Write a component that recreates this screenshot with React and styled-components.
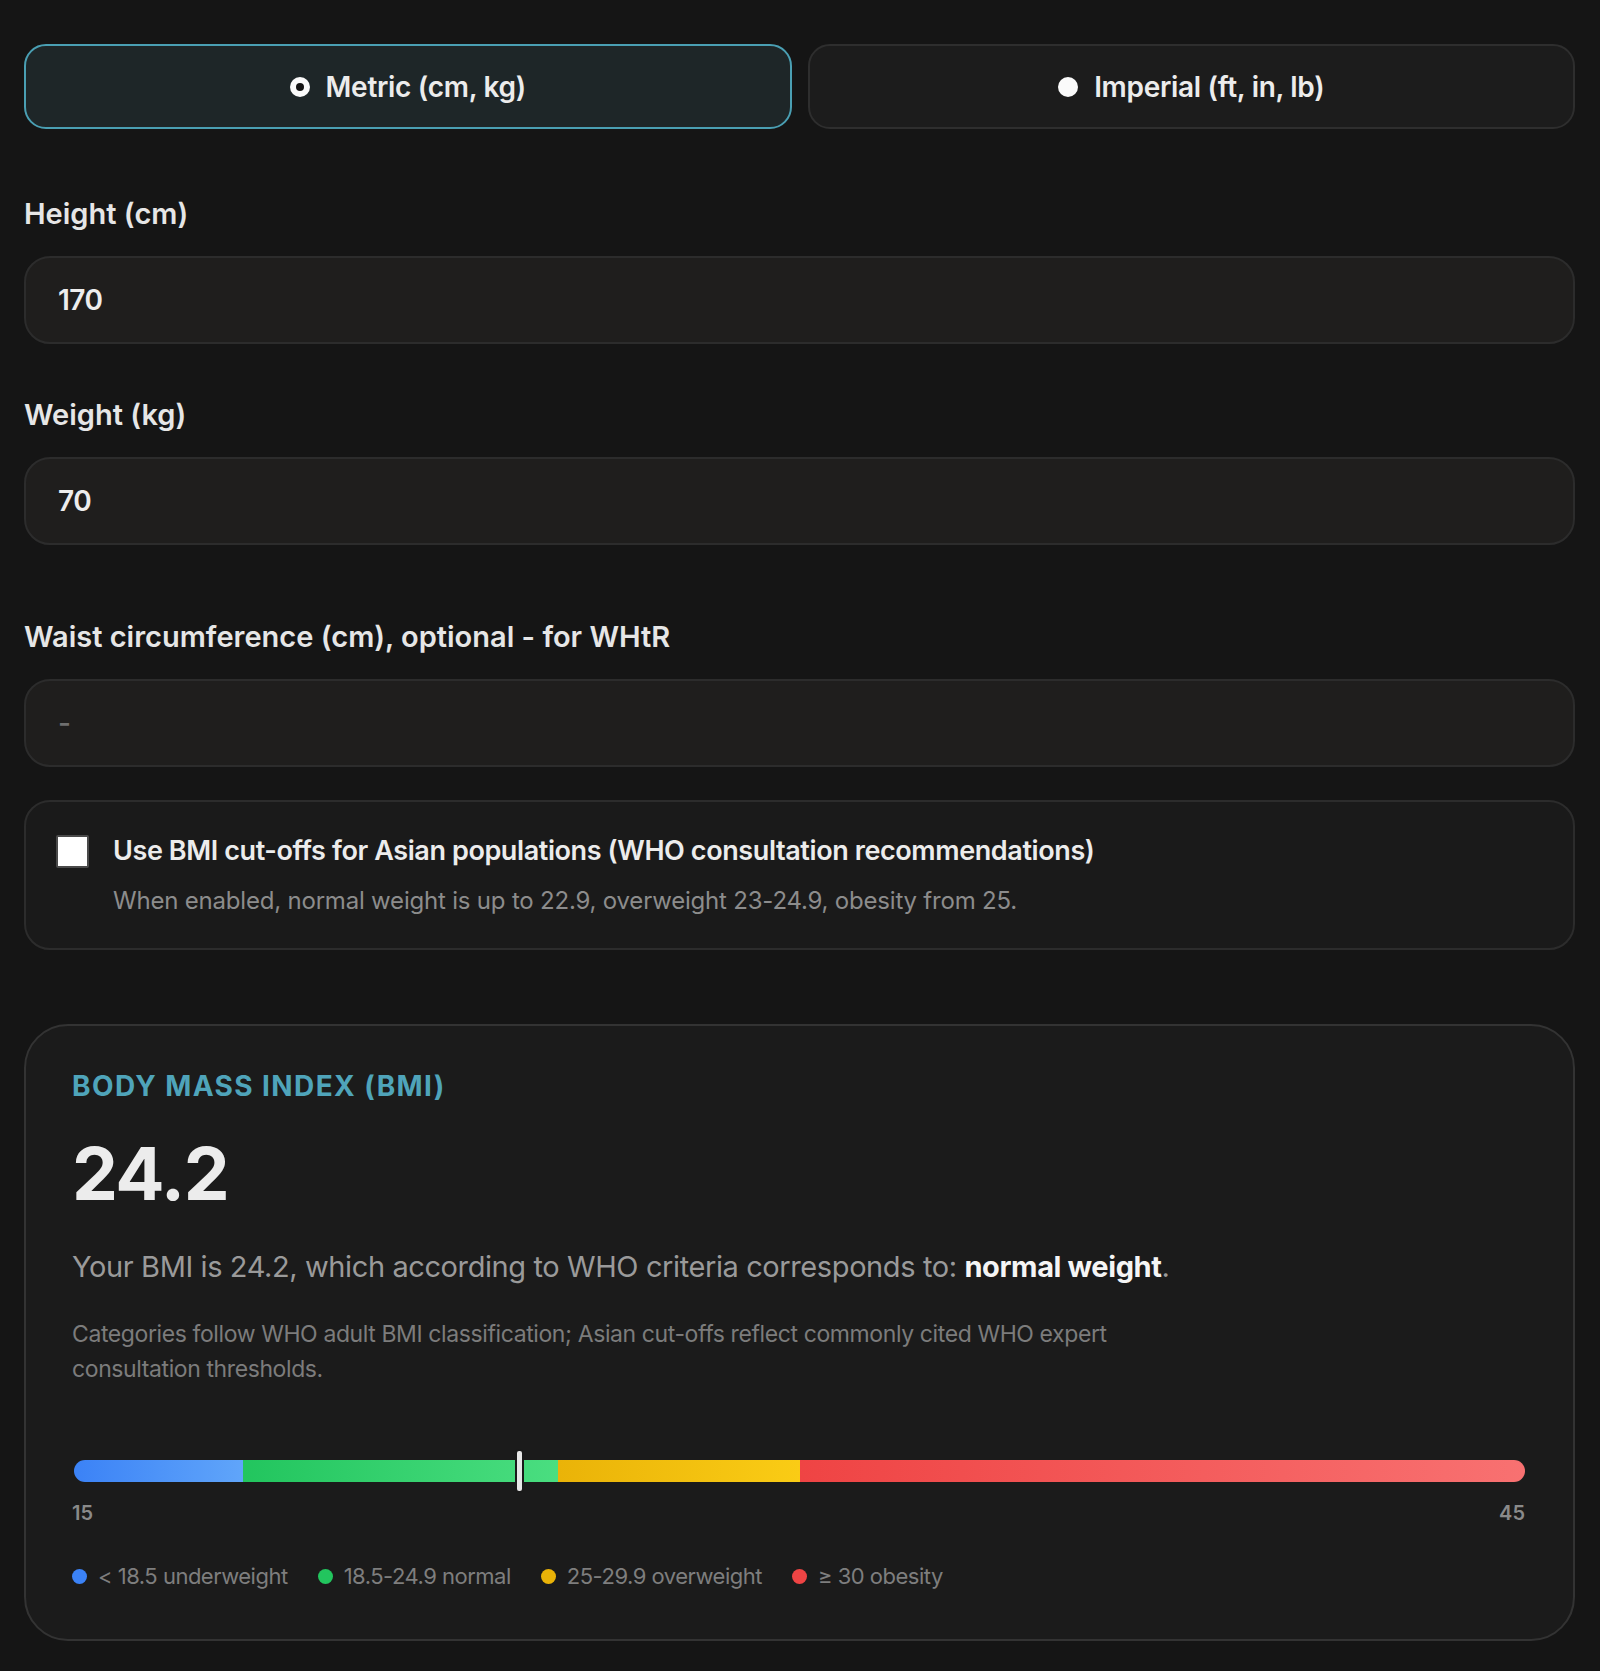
import React, { useState } from "react";
import styled, { createGlobalStyle } from "styled-components";

const GlobalStyle = createGlobalStyle`
  html, body {
    margin: 0;
    padding: 0;
    background: #151515;
  }
  body {
    font-family: "Inter", "Noto Sans", sans-serif;
    color: #ececec;
  }
  * {
    box-sizing: border-box;
  }
`;

const Page = styled.div`
  display: flex;
  flex-direction: column;
  padding: 44px 25px 26px 24px;
  min-height: 1671px;
`;

const UnitToggle = styled.div`
  display: grid;
  grid-template-columns: 1fr 1fr;
  gap: 16px;
`;

const UnitButton = styled.button`
  display: flex;
  align-items: center;
  justify-content: center;
  gap: 16px;
  height: 85px;
  border-radius: 22px;
  border: 2px solid ${(props) => (props.active ? "#4a9fb3" : "#2e2e2e")};
  background: ${(props) => (props.active ? "#1e2628" : "#1c1c1c")};
  color: #ececec;
  font-family: inherit;
  font-size: 28px;
  font-weight: 600;
  letter-spacing: -0.3px;
  cursor: pointer;
`;

const RadioDot = styled.span`
  width: 20px;
  height: 20px;
  border-radius: 50%;
  background: #fafafa;
  position: relative;

  &::after {
    content: "";
    display: ${(props) => (props.checked ? "block" : "none")};
    position: absolute;
    inset: 6px;
    border-radius: 50%;
    background: #141414;
  }
`;

const Field = styled.div`
  display: flex;
  flex-direction: column;
  gap: 24px;
  margin-top: ${(props) => props.spaceTop}px;
`;

const Label = styled.label`
  font-size: 29px;
  font-weight: 600;
  line-height: 36px;
  letter-spacing: 0;
  color: #e6e6e6;
`;

const Input = styled.input`
  height: 88px;
  width: 100%;
  padding: 0 32px;
  border-radius: 26px;
  border: 2px solid #2c2c2c;
  background: #1f1e1d;
  color: #ededed;
  font-family: inherit;
  font-size: 28px;
  font-weight: 600;
  letter-spacing: -0.5px;
  outline: none;

  &::placeholder {
    color: #6f6f6f;
    font-weight: 500;
  }
`;

const OptionCard = styled.label`
  display: flex;
  align-items: flex-start;
  gap: 24px;
  margin-top: 33px;
  padding: 32px 30px 30px;
  border-radius: 26px;
  border: 2px solid #2c2c2c;
  background: #1a1a1a;
  cursor: pointer;
`;

const CheckBox = styled.span`
  flex: none;
  width: 33px;
  height: 33px;
  margin-top: 1px;
  border: 2px solid #4a4a4a;
  border-radius: 2px;
  background: ${(props) => (props.checked ? "#4a9fb3" : "#ffffff")};
`;

const OptionText = styled.div`
  display: flex;
  flex-direction: column;
  gap: 16px;
`;

const OptionTitle = styled.div`
  font-size: 27px;
  font-weight: 600;
  line-height: 34px;
  letter-spacing: -0.4px;
  color: #ececec;
`;

const OptionHint = styled.div`
  font-size: 24px;
  line-height: 34px;
  letter-spacing: -0.2px;
  color: #8c8c8c;
`;

const ResultCard = styled.section`
  display: flex;
  flex-direction: column;
  margin-top: 74px;
  padding: 44px 46px 48px;
  border-radius: 44px;
  border: 2px solid #333;
  background: #1b1b1b;
`;

const Eyebrow = styled.div`
  font-size: 28px;
  font-weight: 700;
  line-height: 32px;
  letter-spacing: 1.4px;
  text-transform: uppercase;
  color: #4fa4ba;
`;

const BigValue = styled.div`
  margin-top: 32px;
  font-size: 73px;
  font-weight: 700;
  line-height: 80px;
  letter-spacing: -1.5px;
  color: #ececec;
`;

const Summary = styled.p`
  margin: 33px 0 0;
  font-size: 29px;
  line-height: 40px;
  letter-spacing: -0.4px;
  color: #9a9a9a;

  strong {
    color: #f5f5f5;
    font-weight: 700;
  }
`;

const Note = styled.p`
  margin: 30px 0 0;
  max-width: 1100px;
  font-size: 23px;
  line-height: 35px;
  letter-spacing: -0.4px;
  color: #7c7c7c;
`;

const Scale = styled.div`
  position: relative;
  display: flex;
  align-items: center;
  height: 44px;
  margin-top: 62px;
  padding: 0 2px;
`;

const Track = styled.div`
  display: flex;
  width: 100%;
  height: 22px;
  border-radius: 11px;
  overflow: hidden;
`;

const Segment = styled.div`
  flex: ${(props) => props.span};
  background: linear-gradient(90deg, ${(props) => props.from}, ${(props) => props.to});
`;

const Marker = styled.div`
  position: absolute;
  top: 0;
  width: 9px;
  height: 44px;
  margin-left: -4px;
  border-radius: 4px;
  border: 2px solid #1a1a1a;
  background: #e8e8e8;
`;

const ScaleEnds = styled.div`
  display: flex;
  justify-content: space-between;
  margin-top: 8px;
  padding: 0 2px 0 0;
  font-size: 20px;
  font-weight: 600;
  line-height: 24px;
  color: #8a8a8a;
`;

const Legend = styled.ul`
  display: flex;
  gap: 30px;
  margin: 36px 0 0;
  padding: 0;
  list-style: none;
`;

const LegendItem = styled.li`
  display: flex;
  align-items: center;
  gap: 11px;
  font-size: 22px;
  line-height: 30px;
  letter-spacing: -0.5px;
  color: #7e7e7e;
`;

const LegendDot = styled.span`
  width: 15px;
  height: 15px;
  border-radius: 50%;
  background: ${(props) => props.color};
`;

const MIN = 15;
const MAX = 45;

const segments = [
  { span: 3.5, from: "#3b82f6", to: "#60a5fa" },
  { span: 6.5, from: "#22c55e", to: "#4ade80" },
  { span: 5, from: "#eab308", to: "#facc15" },
  { span: 15, from: "#ef4444", to: "#f87171" },
];

const legend = [
  { color: "#3b82f6", text: "< 18.5 underweight" },
  { color: "#22c55e", text: "18.5-24.9 normal" },
  { color: "#eab308", text: "25-29.9 overweight" },
  { color: "#ef4444", text: "≥ 30 obesity" },
];

export default function App() {
  const [unit, setUnit] = useState("metric");
  const [height, setHeight] = useState("170");
  const [weight, setWeight] = useState("70");
  const [waist, setWaist] = useState("");
  const [asian, setAsian] = useState(false);

  const bmi = 24.2;
  const pos = ((bmi - MIN) / (MAX - MIN)) * 100;

  return (
    <>
      <GlobalStyle />
      <Page>
        <UnitToggle>
          <UnitButton active={unit === "metric"} onClick={() => setUnit("metric")}>
            <RadioDot checked={unit === "metric"} />
            Metric (cm, kg)
          </UnitButton>
          <UnitButton active={unit === "imperial"} onClick={() => setUnit("imperial")}>
            <RadioDot checked={unit === "imperial"} />
            Imperial (ft, in, lb)
          </UnitButton>
        </UnitToggle>

        <Field spaceTop={67}>
          <Label>Height (cm)</Label>
          <Input value={height} onChange={(e) => setHeight(e.target.value)} />
        </Field>

        <Field spaceTop={53}>
          <Label>Weight (kg)</Label>
          <Input value={weight} onChange={(e) => setWeight(e.target.value)} />
        </Field>

        <Field spaceTop={74}>
          <Label>Waist circumference (cm), optional - for WHtR</Label>
          <Input placeholder="-" value={waist} onChange={(e) => setWaist(e.target.value)} />
        </Field>

        <OptionCard onClick={() => setAsian(!asian)}>
          <CheckBox checked={asian} />
          <OptionText>
            <OptionTitle>
              Use BMI cut-offs for Asian populations (WHO consultation recommendations)
            </OptionTitle>
            <OptionHint>
              When enabled, normal weight is up to 22.9, overweight 23-24.9, obesity from 25.
            </OptionHint>
          </OptionText>
        </OptionCard>

        <ResultCard>
          <Eyebrow>Body Mass Index (BMI)</Eyebrow>
          <BigValue>24.2</BigValue>
          <Summary>
            Your BMI is 24.2, which according to WHO criteria corresponds to:{" "}
            <strong>normal weight</strong>.
          </Summary>
          <Note>
            Categories follow WHO adult BMI classification; Asian cut-offs reflect commonly
            cited WHO expert consultation thresholds.
          </Note>

          <Scale>
            <Track>
              {segments.map((s) => (
                <Segment key={s.from} span={s.span} from={s.from} to={s.to} />
              ))}
            </Track>
            <Marker style={{ left: `calc(2px + (100% - 4px) * ${pos / 100})` }} />
          </Scale>
          <ScaleEnds>
            <span>{MIN}</span>
            <span>{MAX}</span>
          </ScaleEnds>

          <Legend>
            {legend.map((l) => (
              <LegendItem key={l.text}>
                <LegendDot color={l.color} />
                {l.text}
              </LegendItem>
            ))}
          </Legend>
        </ResultCard>
      </Page>
    </>
  );
}
